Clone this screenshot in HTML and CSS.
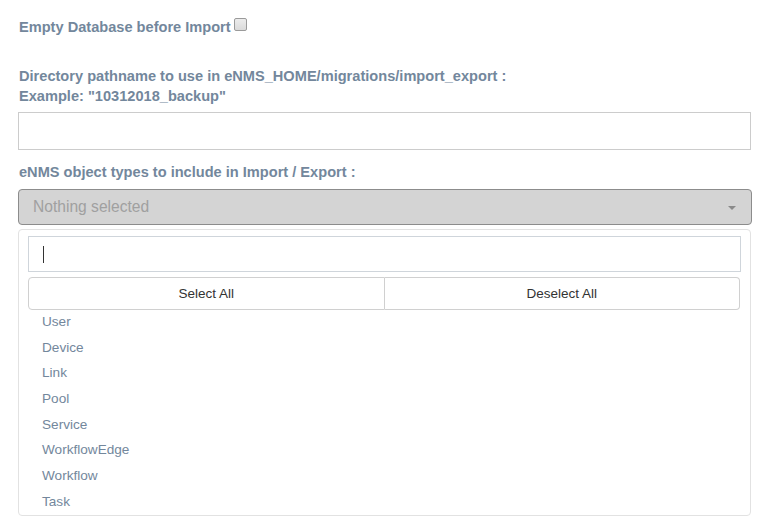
FILE: index.html
```html
<!DOCTYPE html>
<html>
<head>
<meta charset="utf-8">
<link rel="stylesheet" href="styles.css">
</head>
<body>
<div class="form">
  <label class="lbl lbl-first">Empty Database before Import<input type="checkbox" class="chk"></label>
  <label class="lbl lbl-dir">Directory pathname to use in eNMS_HOME/migrations/import_export :<br>Example: "10312018_backup"</label>
  <input type="text" class="text-input">
  <label class="lbl lbl-types">eNMS object types to include in Import / Export :</label>
  <div class="select-btn">
    <span class="select-title">Nothing selected</span>
    <span class="caret"></span>
  </div>
  <div class="dropdown">
    <div class="search-box"><span class="cursor"></span></div>
    <div class="btn-group">
      <button class="btn">Select All</button>
      <button class="btn">Deselect All</button>
    </div>
    <ul class="options">
      <li>User</li>
      <li>Device</li>
      <li>Link</li>
      <li>Pool</li>
      <li>Service</li>
      <li>WorkflowEdge</li>
      <li>Workflow</li>
      <li>Task</li>
    </ul>
  </div>
</div>
</body>
</html>
```

FILE: styles.css
```css
html, body {
  margin: 0;
  padding: 0;
  background: #fff;
}
body {
  font-family: "Liberation Sans", Arial, sans-serif;
}
.form {
  padding: 17px 18px 0 18px;
  display: flex;
  flex-direction: column;
  align-items: stretch;
}
.lbl {
  display: block;
  color: #73879C;
  font-weight: bold;
  font-size: 14.6px;
  line-height: 20px;
  padding-left: 1px;
}
.lbl-first {
  display: flex;
  align-items: flex-start;
}
.chk {
  -webkit-appearance: none;
  appearance: none;
  width: 13px;
  height: 13px;
  margin: 1px 0 0 3px;
  border: 1px solid #9a9a9a;
  border-radius: 2px;
  background: linear-gradient(#ececec, #dadada);
  box-sizing: border-box;
}
.lbl-dir {
  margin-top: 29px;
}
.text-input {
  margin: 6px 0 0 0;
  height: 38px;
  box-sizing: border-box;
  border: 1px solid #cccccc;
  border-radius: 0;
  padding: 0 12px;
  font: inherit;
}
.lbl-types {
  margin-top: 12px;
}
.select-btn {
  margin-top: 7px;
  height: 36px;
  box-sizing: border-box;
  background: #d4d4d4;
  border: 1px solid #8c8c8c;
  border-radius: 4px;
  display: flex;
  align-items: center;
  justify-content: space-between;
  padding: 0 15px 0 14px;
  margin-right: -1px;
}
.select-title {
  color: #a0a0a0;
  font-size: 15.6px;
}
.caret {
  width: 0;
  height: 0;
  border-left: 4px solid transparent;
  border-right: 4px solid transparent;
  border-top: 4px solid #8a8a8a;
  margin-top: 2px;
}
.dropdown {
  margin-top: 4px;
  border: 1px solid #e2e2e2;
  border-radius: 4px;
  padding: 6px 9px 0 9px;
  display: flex;
  flex-direction: column;
}
.search-box {
  height: 36px;
  box-sizing: border-box;
  border: 1px solid #cfd5db;
  display: flex;
  align-items: center;
  padding-left: 14px;
}
.cursor {
  width: 1px;
  height: 17px;
  background: #333;
}
.btn-group {
  margin-top: 5px;
  display: flex;
  margin-right: 1px;
}
.btn {
  flex: 1;
  height: 33px;
  background: #fff;
  border: 1px solid #d0d0d0;
  color: #333;
  font-family: "Liberation Sans", Arial, sans-serif;
  font-size: 13.5px;
  padding: 0;
  margin: 0;
}
.btn:first-child {
  border-radius: 4px 0 0 4px;
}
.btn:last-child {
  border-radius: 0 4px 4px 0;
  border-left: none;
}
.options {
  list-style: none;
  margin: -1px 0 0 0;
  padding: 0;
}
.options li {
  height: 25.7px;
  line-height: 25.7px;
  padding-left: 14px;
  color: #73879C;
  font-size: 13.6px;
}
```
